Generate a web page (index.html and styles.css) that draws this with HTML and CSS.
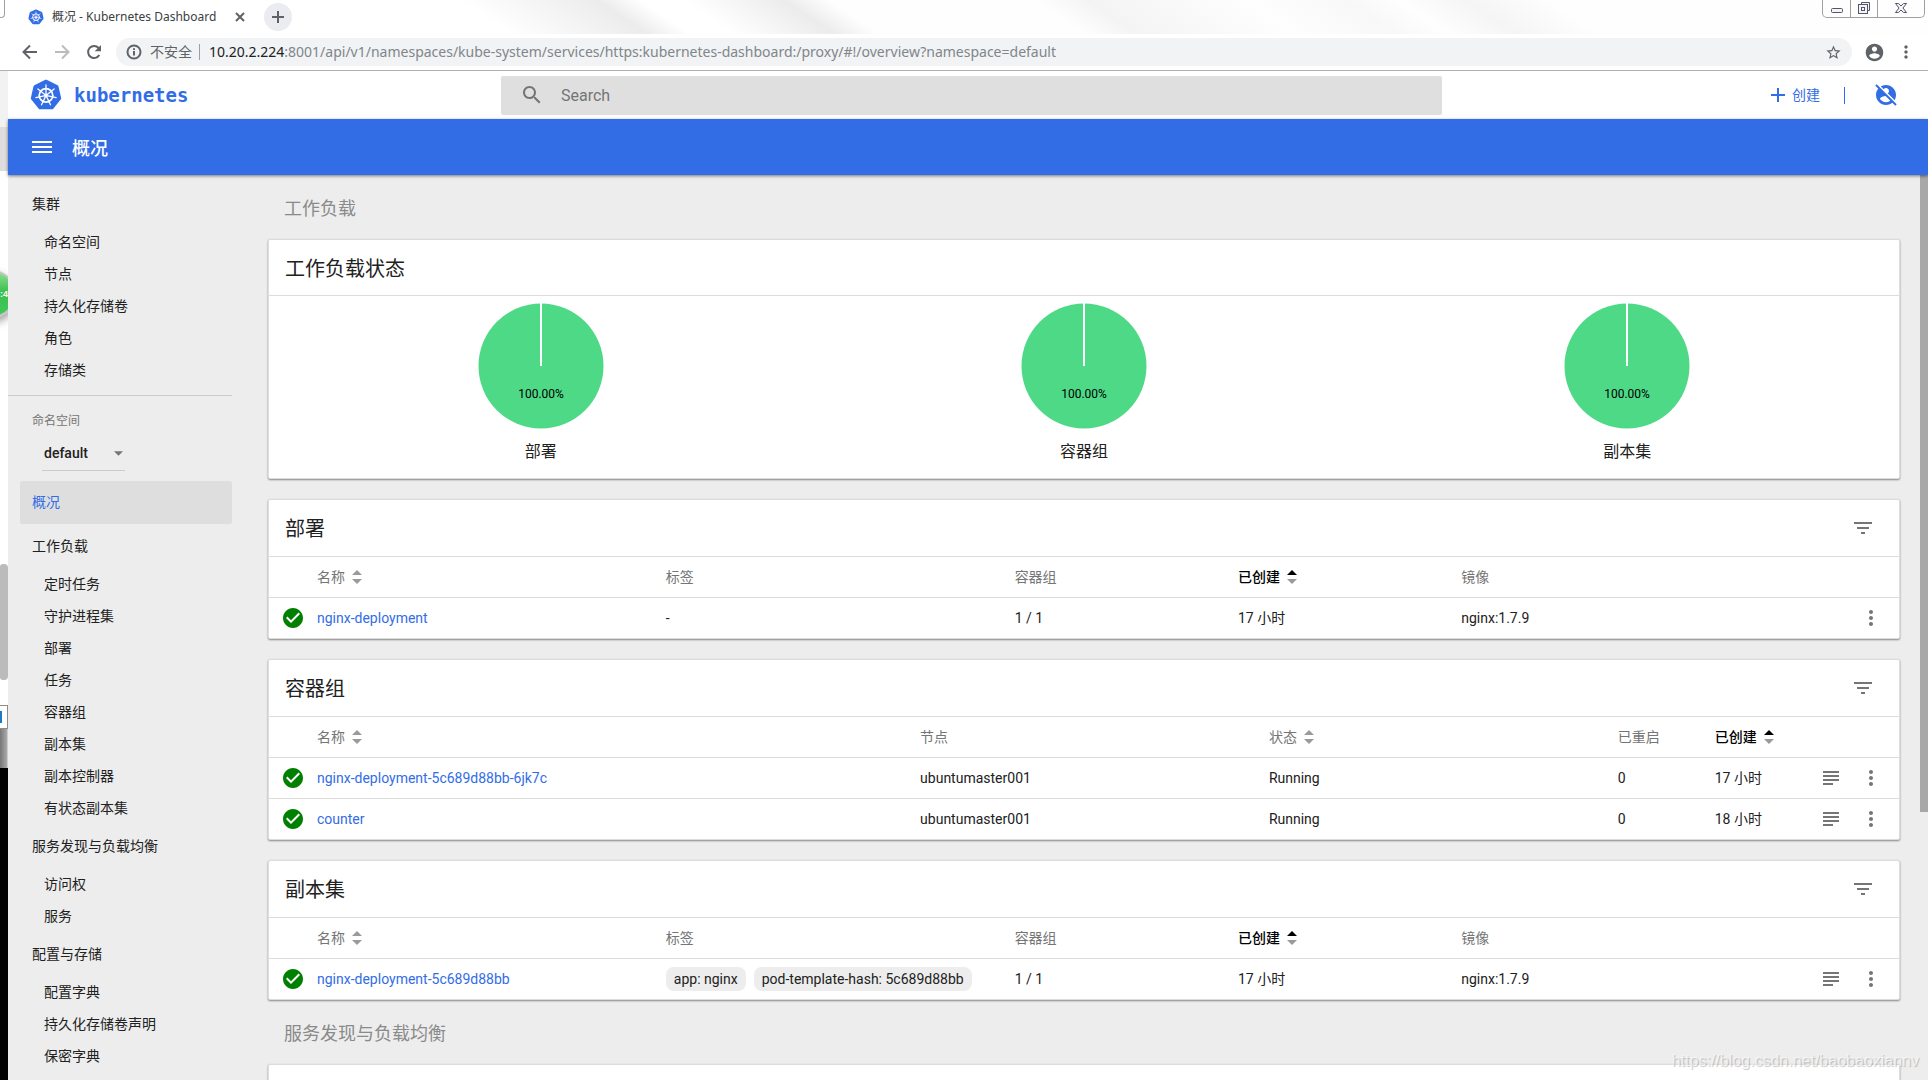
FILE: index.html
```html
<!DOCTYPE html>
<html lang="zh-CN">
<head>
<meta charset="utf-8">
<title>概况 - Kubernetes Dashboard</title>
<link rel="stylesheet" href="styles.css">
</head>
<body>
<svg class="defs" aria-hidden="true">
  <symbol id="k8s" viewBox="0 0 32 32">
    <path d="M16 2.2 27 7.5 29.7 19.3 22.1 28.8H9.9L2.3 19.3 5 7.5z" fill="#326de6" stroke="#326de6" stroke-width="3" stroke-linejoin="round"/>
    <g fill="none" stroke="#fff" stroke-linecap="round">
      <circle cx="16" cy="16.4" r="6.8" stroke-width="1.8"/>
      <path stroke-width="1.3" d="M16 14.5V6M17.5 15.2l6.6-5.3M17.9 16.8l8.2 1.9M16.8 18.1l3.7 7.7M15.2 18.1l-3.7 7.7M14.1 16.8l-8.2 1.9M14.5 15.2 7.9 9.9"/>
    </g>
    <circle cx="16" cy="16.4" r="1.9" fill="#fff"/>
  </symbol>
  <symbol id="sort" viewBox="0 0 10 14"><path class="up" d="M5 0l5 5H0z"/><path d="M5 14l5-5H0z"/></symbol>
  <symbol id="check" viewBox="0 0 24 24"><path d="M12 2C6.5 2 2 6.5 2 12s4.500 10 10 10 10-4.500 10-10S17.500 2 12 2zm-2 15l-5-5 1.410-1.410L10 14.170l7.590-7.590L19 8l-9 9z"/></symbol>
  <symbol id="filter" viewBox="0 0 24 24"><path d="M10 18h4v-2h-4v2zM3 6v2h18V6H3zm3 7h12v-2H6v2z"/></symbol>
  <symbol id="more" viewBox="0 0 24 24"><path d="M12 8c1.100 0 2-.9 2-2s-.9-2-2-2-2 .9-2 2 .9 2 2 2zm0 2c-1.100 0-2 .9-2 2s.9 2 2 2 2-.9 2-2-.9-2-2-2zm0 6c-1.100 0-2 .9-2 2s.9 2 2 2 2-.9 2-2-.9-2-2-2z"/></symbol>
  <symbol id="logs" viewBox="0 0 24 24"><path d="M14 17H4v2h10v-2zm6-8H4v2h16V9zM4 15h16v-2H4v2zM4 5v2h16V5H4z"/></symbol>
  <symbol id="person" viewBox="0 0 24 24"><path d="M12 2C6.480 2 2 6.480 2 12s4.480 10 10 10 10-4.480 10-10S17.520 2 12 2zm0 3c1.660 0 3 1.340 3 3s-1.340 3-3 3-3-1.340-3-3 1.340-3 3-3zm0 14.200c-2.500 0-4.710-1.280-6-3.220.03-1.990 4-3.080 6-3.080 1.990 0 5.970 1.090 6 3.080-1.290 1.940-3.500 3.220-6 3.220z"/></symbol>
</svg>

<header class="chrome">
  <div class="tabs">
    <span class="corner"></span>
    <div class="tab">
      <svg class="favicon"><use href="#k8s"/></svg>
      <span class="tab-title">概况 - Kubernetes Dashboard</span>
      <button class="tab-close" aria-label="关闭"><svg viewBox="0 0 10 10"><path d="M1 1l8 8M9 1L1 9"/></svg></button>
    </div>
    <button class="tab-new" aria-label="新标签页"><svg viewBox="0 0 14 14"><path d="M7 1v12M1 7h12"/></svg></button>
    <div class="win">
      <button aria-label="最小化"><svg viewBox="0 0 14 12"><rect x="1.500" y="6.500" width="11" height="4" rx="1"/></svg></button>
      <button aria-label="还原"><svg viewBox="0 0 14 12"><path d="M4.500 2.500v-2h8v8h-2"/><rect x="1.500" y="2.500" width="9" height="9"/><rect x="4.500" y="5.500" width="3" height="3"/></svg></button>
      <button class="wide" aria-label="关闭窗口"><svg viewBox="0 0 14 12"><path d="M1.500 1.500h3L7 4l2.500-2.500h3L9 6l3.500 4.500h-3L7 8l-2.500 2.500h-3L5 6z"/></svg></button>
    </div>
  </div>
  <div class="toolbar">
    <button class="nav" aria-label="后退"><svg viewBox="0 0 16 16"><path d="M15 8H2M8 1.500L1.500 8 8 14.500"/></svg></button>
    <button class="nav off" aria-label="前进"><svg viewBox="0 0 16 16"><path d="M1 8h13M8 1.500L14.500 8 8 14.500"/></svg></button>
    <button class="nav" aria-label="刷新"><svg viewBox="0 0 16 16"><path d="M13.300 11A6 6 0 1 1 12.600 4"/><path class="solid" d="M15 1v6.300H8.700z"/></svg></button>
    <div class="omnibox">
      <svg class="info" viewBox="0 0 16 16"><circle cx="8" cy="8" r="6.500"/><path d="M8 7v4.500M8 4.300v1.600"/></svg>
      <span class="unsafe">不安全</span>
      <span class="url"><b>10.20.2.224</b>:8001/api/v1/namespaces/kube-system/services/https:kubernetes-dashboard:/proxy/#!/overview?namespace=default</span>
      <button class="star" aria-label="收藏"><svg viewBox="0 0 24 24"><path d="M22 9.240l-7.190-.62L12 2 9.190 8.630 2 9.240l5.460 4.730L5.820 21 12 17.270 18.180 21l-1.630-7.030L22 9.240zM12 15.400l-3.760 2.270 1-4.280-3.320-2.880 4.380-.38L12 6.100l1.710 4.040 4.380.38-3.320 2.880 1 4.280L12 15.400z"/></svg></button>
    </div>
    <button class="tool" aria-label="用户"><svg><use href="#person"/></svg></button>
    <button class="tool" aria-label="菜单"><svg viewBox="0 0 24 24"><use href="#more"/></svg></button>
  </div>
</header>

<div class="below">
  <div class="desktop" aria-hidden="true">
    <i class="d1"></i><i class="d2"></i><i class="d3"></i><i class="ball">:4</i><i class="d4"></i><i class="thumb"></i><i class="d5"></i><i class="box"></i><i class="grey"></i><i class="black"></i>
  </div>
  <div class="app">
    <header class="head">
      <a class="logo" href="#"><svg><use href="#k8s"/></svg><span>kubernetes</span></a>
      <label class="search">
        <svg viewBox="0 0 24 24"><path d="M15.500 14h-.79l-.28-.27C15.410 12.590 16 11.110 16 9.500 16 5.910 13.090 3 9.500 3S3 5.910 3 9.500 5.910 16 9.500 16c1.610 0 3.090-.59 4.230-1.570l.27.28v.79l5 4.990L20.490 19l-4.990-5zm-6 0C7.010 14 5 11.990 5 9.500S7.010 5 9.500 5 14 7.010 14 9.500 11.990 14 9.500 14z"/></svg>
        <input type="search" placeholder="Search" aria-label="Search">
      </label>
      <div class="actions">
        <button class="create"><svg viewBox="0 0 14 14"><path d="M7 0v14M0 7h14"/></svg>创建</button>
        <span class="bar"></span>
        <button class="user" aria-label="用户"><svg viewBox="0 0 24 24"><use href="#person"/><path d="M3 1l20 20" stroke="#fff" stroke-width="2"/><path d="M2 2l20 20" stroke="#326de6" stroke-width="2"/></svg></button>
      </div>
    </header>
    <div class="title">
      <button aria-label="导航"><svg viewBox="0 0 20 12"><path d="M0 0h20v2H0zM0 5h20v2H0zM0 10h20v2H0z"/></svg></button>
      <h1>概况</h1>
    </div>
    <div class="body">
      <nav class="side">
        <a class="group" href="#">集群</a>
        <a href="#">命名空间</a>
        <a href="#">节点</a>
        <a href="#">持久化存储卷</a>
        <a href="#">角色</a>
        <a href="#">存储类</a>
        <div class="ns">
          <label for="ns">命名空间</label>
          <div class="pick">
            <select id="ns"><option>default</option></select>
            <svg viewBox="0 0 10 5"><path d="M0 0h10L5 5z"/></svg>
          </div>
        </div>
        <a class="current" href="#">概况</a>
        <a class="group" href="#">工作负载</a>
        <a href="#">定时任务</a>
        <a href="#">守护进程集</a>
        <a href="#">部署</a>
        <a href="#">任务</a>
        <a href="#">容器组</a>
        <a href="#">副本集</a>
        <a href="#">副本控制器</a>
        <a href="#">有状态副本集</a>
        <a class="group" href="#">服务发现与负载均衡</a>
        <a href="#">访问权</a>
        <a href="#">服务</a>
        <a class="group" href="#">配置与存储</a>
        <a href="#">配置字典</a>
        <a href="#">持久化存储卷声明</a>
        <a href="#">保密字典</a>
      </nav>
      <main class="main">
        <h2>工作负载</h2>
        <section class="card status">
          <header><h3>工作负载状态</h3></header>
          <div class="pies">
            <figure><svg viewBox="0 0 126 126"><circle cx="63" cy="63" r="62.500"/><path d="M63 0v63"/><text x="63" y="95">100.00%</text></svg><figcaption>部署</figcaption></figure>
            <figure><svg viewBox="0 0 126 126"><circle cx="63" cy="63" r="62.500"/><path d="M63 0v63"/><text x="63" y="95">100.00%</text></svg><figcaption>容器组</figcaption></figure>
            <figure><svg viewBox="0 0 126 126"><circle cx="63" cy="63" r="62.500"/><path d="M63 0v63"/><text x="63" y="95">100.00%</text></svg><figcaption>副本集</figcaption></figure>
          </div>
        </section>

        <section class="card">
          <header><h3>部署</h3><button aria-label="筛选"><svg><use href="#filter"/></svg></button></header>
          <table>
            <colgroup><col class="c-icon"><col class="c-wide"><col class="c-wide"><col class="c-mid"><col class="c-mid"><col><col class="c-acts"></colgroup>
            <thead><tr><th></th><th><button>名称<svg><use href="#sort"/></svg></button></th><th>标签</th><th>容器组</th><th><button class="on">已创建<svg><use href="#sort"/></svg></button></th><th>镜像</th><th></th></tr></thead>
            <tbody><tr><td><svg class="ok"><use href="#check"/></svg></td><td><a href="#">nginx-deployment</a></td><td>-</td><td>1 / 1</td><td>17 小时</td><td>nginx:1.7.9</td>
              <td><div class="acts"><button aria-label="操作"><svg><use href="#more"/></svg></button></div></td></tr></tbody>
          </table>
        </section>

        <section class="card">
          <header><h3>容器组</h3><button aria-label="筛选"><svg><use href="#filter"/></svg></button></header>
          <table>
            <colgroup><col class="c-icon"><col class="c-pod"><col class="c-wide"><col class="c-wide"><col class="c-small"><col><col class="c-acts"></colgroup>
            <thead><tr><th></th><th><button>名称<svg><use href="#sort"/></svg></button></th><th>节点</th><th><button>状态<svg><use href="#sort"/></svg></button></th><th>已重启</th><th><button class="on">已创建<svg><use href="#sort"/></svg></button></th><th></th></tr></thead>
            <tbody>
              <tr><td><svg class="ok"><use href="#check"/></svg></td><td><a href="#">nginx-deployment-5c689d88bb-6jk7c</a></td><td>ubuntumaster001</td><td>Running</td><td>0</td><td>17 小时</td>
                <td><div class="acts"><button aria-label="日志"><svg><use href="#logs"/></svg></button><button aria-label="操作"><svg><use href="#more"/></svg></button></div></td></tr>
              <tr><td><svg class="ok"><use href="#check"/></svg></td><td><a href="#">counter</a></td><td>ubuntumaster001</td><td>Running</td><td>0</td><td>18 小时</td>
                <td><div class="acts"><button aria-label="日志"><svg><use href="#logs"/></svg></button><button aria-label="操作"><svg><use href="#more"/></svg></button></div></td></tr>
            </tbody>
          </table>
        </section>

        <section class="card">
          <header><h3>副本集</h3><button aria-label="筛选"><svg><use href="#filter"/></svg></button></header>
          <table>
            <colgroup><col class="c-icon"><col class="c-wide"><col class="c-wide"><col class="c-mid"><col class="c-mid"><col><col class="c-acts"></colgroup>
            <thead><tr><th></th><th><button>名称<svg><use href="#sort"/></svg></button></th><th>标签</th><th>容器组</th><th><button class="on">已创建<svg><use href="#sort"/></svg></button></th><th>镜像</th><th></th></tr></thead>
            <tbody><tr><td><svg class="ok"><use href="#check"/></svg></td><td><a href="#">nginx-deployment-5c689d88bb</a></td><td><div class="chips"><span>app: nginx</span><span>pod-template-hash: 5c689d88bb</span></div></td><td>1 / 1</td><td>17 小时</td><td>nginx:1.7.9</td>
              <td><div class="acts"><button aria-label="日志"><svg><use href="#logs"/></svg></button><button aria-label="操作"><svg><use href="#more"/></svg></button></div></td></tr></tbody>
          </table>
        </section>

        <h2>服务发现与负载均衡</h2>
        <section class="card"><header></header></section>
      </main>
      <div class="scroll"><i></i></div>
    </div>
  </div>
</div>
<div class="mark">https://blog.csdn.net/baobaoxiannv</div>
</body>
</html>
```
FILE: styles.css
```css
* { box-sizing: border-box; }

body {
  margin: 0;
  height: 100vh;
  overflow: hidden;
  display: flex;
  flex-direction: column;
  background: #fff;
  color: #212121;
  font: 14px/20px Roboto, "Noto Sans CJK SC", sans-serif;
}

button {
  display: flex;
  align-items: center;
  justify-content: center;
  padding: 0;
  border: 0;
  background: none;
  color: inherit;
  font: inherit;
}

svg { display: block; flex: none; fill: currentColor; }
a { color: inherit; text-decoration: none; }
h1, h2, h3, figure { margin: 0; font-weight: 400; }
.defs { display: none; }

/* browser frame */
.chrome {
  border-bottom: 1px solid #b0b0b0;
  color: #5f6368;
}

.tabs {
  display: flex;
  height: 34px;
  background: linear-gradient(34deg, #fff 285px, #ececec 362px, #fff 386px, #fff 410px, #ececec 466px, #fefefe 492px, #fefefe 606px, #f4f4f4 636px, #fefefe 725px, #f8f8f8 780px, #fefefe 810px, #f5f5f5 848px, #fefefe 895px);
}

.corner {
  width: 5px;
  height: 18px;
  border: 1px solid #a0a0a0;
  border-width: 0 1px 1px 0;
  border-radius: 0 0 4px 0;
}

.tab {
  display: flex;
  align-items: center;
  width: 246px;
  padding: 0 6px 0 23px;
  margin-right: 13px;
  gap: 8px;
}
.tab, .tab-new, .toolbar { font-family: "Noto Sans", "Noto Sans CJK SC", sans-serif; }
.favicon { width: 16px; height: 16px; }
.tab-title { flex: 1; color: #3c4043; font-size: 12px; white-space: nowrap; }
.tab-close svg { width: 10px; height: 10px; }
.tab-close svg, .tab-new svg { fill: none; stroke: currentColor; stroke-width: 2; }
.tab-new {
  width: 28px;
  height: 28px;
  margin-top: 3px;
  border-radius: 50%;
  background: #ebecf1;
}
.tab-new svg { width: 14px; height: 14px; }

.win {
  display: flex;
  height: 18px;
  margin-left: auto;
  margin-right: 3px;
  border: 1px solid #a0a0a0;
  border-top: 0;
  border-radius: 0 0 5px 5px;
}
.win button { width: 27px; padding-bottom: 2px; }
.win button + button { border-left: 1px solid #a0a0a0; }
.win .wide { width: 47px; }
.win svg { width: 14px; height: 12px; fill: #f4f4f4; stroke: #54546a; }

.toolbar {
  display: flex;
  align-items: center;
  height: 36px;
  padding: 0 6px 0 14px;
}
.nav { width: 32px; height: 28px; }
.nav svg { width: 16px; height: 16px; fill: none; stroke: currentColor; stroke-width: 2; }
.nav .solid { fill: currentColor; stroke: none; }
.nav.off { color: #babcbe; }
.omnibox {
  display: flex;
  flex: 1;
  align-items: center;
  height: 28px;
  margin: 0 6px;
  padding: 0 10px;
  border-radius: 14px;
  background: #f1f3f4;
}
.info { width: 16px; height: 16px; fill: none; stroke: currentColor; stroke-width: 2; }
.unsafe { margin: 0 7px 0 8px; font-size: 14px; line-height: 16px; }
.url {
  flex: 1;
  padding-left: 9px;
  border-left: 1px solid #9aa0a6;
  color: #80868b;
  font-size: 14px;
  line-height: 16px;
}
.url b { color: #202124; font-weight: 400; }
.star svg { width: 17px; height: 17px; }
.tool { width: 32px; height: 28px; }
.tool svg { width: 21px; height: 21px; }
.tool + .tool svg { width: 20px; height: 20px; }

/* strip of the desktop left of the window */
.below { display: flex; flex: 1; min-height: 0; }
.desktop { display: flex; flex-direction: column; width: 8px; overflow: hidden; }
.desktop i { flex: none; font-style: normal; }
.d1 { height: 56px; background: #f2f2f2; }
.d2 { height: 44px; background: #dedede; }
.d3 { height: 99px; }
.ball {
  width: 48px;
  height: 48px;
  margin-left: -32px;
  padding-right: 6px;
  border: 2px solid #c4c4c4;
  border-radius: 50%;
  background: linear-gradient(#8fe08f, #3cbf50 45%, #3fc95a);
  box-shadow: 0 4px 8px #999;
  color: #fff;
  font: bold 9px/44px "Liberation Sans", sans-serif;
  text-align: right;
}
.d4 { height: 246px; }
.thumb { height: 116px; border-radius: 3px 4px 4px 3px; background: #bbb; }
.d5 { height: 25px; }
.box {
  height: 24px;
  border: solid #8c8c8c;
  border-width: 1px 1px 1px 0;
  background: linear-gradient(90deg, #1d78c8 2px, transparent 2px) 0 5px / 100% 12px no-repeat;
}
.grey { height: 39px; border-right: 1px solid #ccc; background: linear-gradient(90deg, #777, #aaa); }
.black { height: 400px; background: #000; }

/* dashboard */
.app { display: flex; flex: 1; flex-direction: column; min-width: 0; }
.head {
  display: grid;
  grid-template-columns: 1fr 2fr 1fr;
  align-items: center;
  height: 48px;
  color: #326de6;
}
.logo { display: flex; align-items: center; gap: 12px; padding-left: 22px; }
.logo svg { width: 32px; height: 32px; }
.logo span { font: bold 19px/24px "DejaVu Sans Mono", monospace; }
.search {
  display: flex;
  align-items: center;
  gap: 17px;
  height: 39px;
  margin: 0 6px 0 13px;
  padding-left: 19px;
  border-radius: 2px;
  background: #dfdfdf;
  color: #757575;
}
.search svg { width: 24px; height: 24px; }
.search input { flex: 1; padding: 2px 0 0; border: 0; outline: 0; background: none; font: 16px/24px Roboto, sans-serif; }
.search input::placeholder { color: #757575; }
.actions { display: flex; align-items: center; justify-content: flex-end; padding-right: 30px; }
.create { gap: 7px; }
.create svg { width: 14px; height: 14px; stroke: currentColor; stroke-width: 2; }
.bar { width: 1px; height: 17px; margin: 0 29px 0 24px; background: #326de6; }
.user svg { width: 24px; height: 24px; }

.title {
  display: flex;
  align-items: center;
  gap: 20px;
  height: 56px;
  padding-left: 24px;
  background: #326de6;
  box-shadow: 0 1px 3px #00000080;
  color: #fff;
  z-index: 1;
}
.title svg { width: 20px; height: 12px; }
.title h1 { padding-top: 3px; font-size: 18px; font-weight: 500; line-height: 24px; }

.body { display: flex; flex: 1; min-height: 0; background: #ededed; }

.side {
  display: flex;
  flex: none;
  flex-direction: column;
  width: 224px;
  padding-top: 7px;
  overflow: hidden;
}
.side a { flex: none; padding-left: 36px; line-height: 32px; }
.side .group { padding-left: 24px; line-height: 44px; }
.side .current {
  margin-left: 12px;
  padding-left: 12px;
  border-radius: 2px;
  background: #dedede;
  color: #326de6;
  line-height: 43px;
}
.ns { margin-top: 9px; padding: 15px 0 10px 24px; border-top: 1px solid #ccc; }
.ns label { display: block; color: #757575; font-size: 12px; line-height: 20px; }
.pick {
  display: grid;
  align-items: center;
  width: 83px;
  height: 40px;
  margin-left: 10px;
  padding: 5px 2px 0;
  border-bottom: 1px solid #ccc;
}
.pick select, .pick svg { grid-area: 1 / 1; }
.pick select {
  padding: 0;
  border: 0;
  appearance: none;
  background: none;
  color: #212121;
  font: 500 14px/20px Roboto, sans-serif;
}
.pick svg { width: 9px; height: 5px; justify-self: end; color: #757575; }

.main { flex: 1; min-width: 0; padding: 0 20px 0 36px; overflow: hidden; }
.main h2 {
  height: 64px;
  padding: 4px 0 0 16px;
  color: #8a8a8a;
  font-size: 18px;
  line-height: 60px;
}
.card {
  border: 1px solid #dcdcdc;
  border-radius: 2px;
  background: #fff;
  box-shadow: 0 1px 2px #00000070;
}
.card + .card { margin-top: 20px; }
.card > header {
  display: flex;
  align-items: center;
  justify-content: space-between;
  height: 56px;
  padding: 0 24px 0 16px;
}
.card h3 { padding-top: 2px; font-size: 20px; line-height: 28px; }
.card button { color: #757575; }
.card header svg, .acts svg, .ok { width: 24px; height: 24px; }

.status > header { height: 55px; }
.pies { display: grid; grid-template-columns: repeat(3, 1fr); height: 183px; padding-top: 7px; border-top: 1px solid #dcdcdc; }
.pies figure { display: flex; flex-direction: column; align-items: center; gap: 11px; }
.pies svg { width: 126px; height: 126px; }
.pies circle { fill: #4dd986; }
.pies path { stroke: #fff; stroke-width: 2; }
.pies text { font-size: 12px; fill: #000; text-anchor: middle; }
.pies figcaption { font-size: 16px; line-height: 24px; }

table { width: 100%; table-layout: fixed; border-collapse: separate; border-spacing: 0; }
th, td { height: 41px; padding: 0; border-top: 1px solid #dcdcdc; text-align: left; white-space: nowrap; font-weight: 400; }
th { color: #757575; }
th button { gap: 7px; }
th svg { width: 10px; height: 14px; fill: #9a9a9a; }
.up { fill: var(--up, #9a9a9a); }
.card .on { --up: #000; color: #000; font-weight: 500; }
td a { color: #326de6; }
.c-icon { width: 48px; }
.c-wide { width: 21.4%; }
.c-mid { width: 13.7%; }
.c-pod { width: 37%; }
.c-small { width: 97px; }
.c-acts { width: 80px; }
.ok { margin-left: 12px; color: #008000; }
.acts { display: flex; justify-content: flex-end; gap: 16px; padding-right: 16px; }
.chips { display: flex; gap: 8px; }
.chips span { padding: 0 8px; border-radius: 8px; background: #ededed; line-height: 24px; }

.scroll { flex: none; width: 8px; }
.scroll i { display: block; height: 637px; background: #a8a8a8; }

.mark {
  position: absolute;
  right: 9px;
  bottom: 8px;
  color: #ffffffa0;
  font: 16px/22px "Liberation Sans", sans-serif;
  text-shadow: 1px 1px 1px #00000038;
}
```
